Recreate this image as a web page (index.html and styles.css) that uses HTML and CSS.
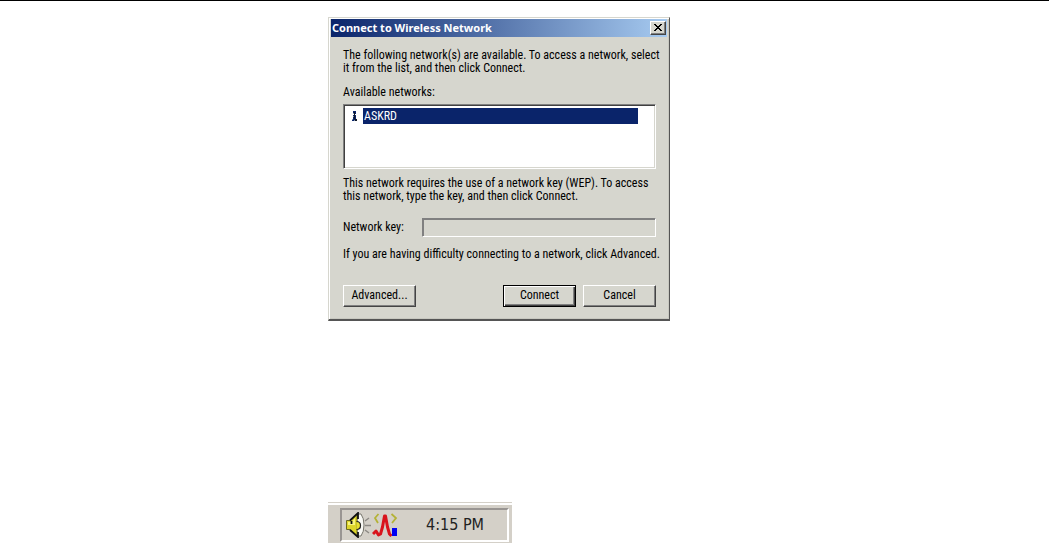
FILE: index.html
```html
<!DOCTYPE html>
<html lang="en">
<head>
    <meta charset="UTF-8">
    <meta name="viewport" content="width=device-width, initial-scale=1.0">
    <title>Connect to Wireless Network</title>
    <link rel="stylesheet" href="styles.css">
</head>
<body>
    <main class="page">
        <form class="dialog">
            <div class="titlebar">
                <h1>Connect to Wireless Network</h1>
                <button type="button" class="close" aria-label="Close">
                    <svg width="8" height="7" viewBox="0 0 8 7" shape-rendering="crispEdges">
                        <path d="M0 0h2v1h1v1h2V1h1V0h2v1H7v1H6v1H5v1h1v1h1v1h1v1H6V6H5V5H3v1H2v1H0V6h1V5h1V4h1V3H2V2H1V1H0z"/>
                    </svg>
                </button>
            </div>
            <div class="content">
                <p>The following network(s) are available. To access a network, select<br>it from the list, and then click Connect.</p>
                <div class="networks">
                    <span id="networksLabel">Available networks:</span>
                    <ul class="list" role="listbox" aria-labelledby="networksLabel">
                        <li role="option" aria-selected="true">
                            <svg width="6" height="11" viewBox="0 0 6 11" shape-rendering="crispEdges">
                                <path fill="#0a246a" d="M2 0h3v3H2zM2 4h3v2H2zM2 6h3v2H2zM1 8h5v2H1z"/>
                                <path fill="#101828" d="M3 1h1v2H3zM3 3h1v2H3zM3 5h1v3H3zM4 8h2v2H4z"/>
                                <path fill="#7f93ad" d="M2 2h1v1H2zM2 5h1v1H2zM1 8h1v1H1zM3 9h1v1H3z"/>
                            </svg>
                            <span class="name">ASKRD</span>
                        </li>
                    </ul>
                </div>
                <p class="wep">This network requires the use of a network key (WEP). To access<br>this network, type the key, and then click Connect.</p>
                <div class="field">
                    <label for="networkKey">Network key:</label>
                    <input type="password" id="networkKey" disabled>
                </div>
                <p class="hint">If you are having difficulty connecting to a network, click Advanced.</p>
                <div class="buttons">
                    <button type="button" class="advanced">Advanced...</button>
                    <button type="submit" class="default">Connect</button>
                    <button type="button">Cancel</button>
                </div>
            </div>
        </form>

        <div class="taskbar">
            <div class="tray">
                <svg width="26" height="26" viewBox="0 0 26 26">
                    <path fill="#f8f8f4" stroke="#77756c" d="M11 2h4q3 4 3 11t-3 11h-4z"/>
                    <path fill="#ddd52c" stroke="#6d6b20" d="M.5 8.500h4L11 2v22l-6.500-6.500h-4z"/>
                    <path fill="#f8f580" d="M2 10h4l3-4v7H2z"/>
                    <path fill="none" stroke="#111" stroke-width="1.800" d="M4 8.500L12 1v6M4 18l8 7v-5M5.500 9v3"/>
                    <path fill="#e8e030" stroke="#222" stroke-width="1.200" d="M10.500 9.500q4 0 4 4t-4 4"/>
                    <path stroke="#8c8984" stroke-width="1.400" d="M19 9l4-3M19 13.500h6M19 18l4 3"/>
                </svg>
                <svg width="26" height="26" viewBox="0 0 26 26">
                    <path fill="none" stroke="#b4b236" stroke-width="1.800" d="M6.500 2L3 6l3 5M19.500 2L24 6l-4 5"/>
                    <path fill="none" stroke="#d9141c" stroke-width="3" stroke-linejoin="round" d="M1 22l3-3 2.500 4 2-1 2-7 2-11h1l2 11 2 7 2 2"/>
                    <path fill="#0000f4" d="M20 16h5v8h-5z"/>
                </svg>
                <time datetime="16:15">4:15 PM</time>
            </div>
        </div>
    </main>
</body>
</html>
```
FILE: styles.css
```css
* {
    box-sizing: border-box;
}
body {
    margin: 0;
    background-color: white;
    color: black;
    font-family: "Roboto Condensed", Roboto, "Liberation Sans", sans-serif;
    font-size: 12px;
    line-height: 13px;
}
h1,
p,
ul {
    margin: 0;
    padding: 0;
}
.page {
    border-top: 1px solid black;
    padding: 16px 0 0 328px;
}
.dialog {
    max-width: 342px;
    padding: 0 1px 1px 1px;
    background-color: #d6d6ce;
    border: 1px solid #d6d6ce;
    border-right: 1px solid #555;
    border-bottom: 2px solid #555;
    box-shadow: inset 1px 1px white, inset -1px -1px #c8c8c0;
}
.titlebar {
    display: flex;
    align-items: center;
    justify-content: space-between;
    height: 18px;
    margin: 1px 1px 0;
    padding: 0 1px;
    background: linear-gradient(90deg, #0a246a, #a6caf0);
}
.titlebar h1 {
    color: white;
    font-family: "Noto Sans", "DejaVu Sans Condensed", sans-serif;
    font-size: 11px;
    font-weight: bold;
    line-height: 12px;
    white-space: nowrap;
}
button {
    width: 73px;
    height: 22px;
    padding: 0 0 2px;
    background-color: #d6d6ce;
    border: 1px solid;
    border-color: white #444 #444 white;
    border-radius: 0;
    box-shadow: inset -1px -1px #808080;
    color: black;
    font: inherit;
}
.close {
    display: flex;
    align-items: center;
    justify-content: center;
    width: 16px;
    height: 14px;
    padding: 0 1px 1px 0;
}
.content {
    padding: 12px 12px 11px 13px;
    white-space: nowrap;
}
.networks {
    margin-top: 11px;
}
.list {
    height: 65px;
    margin-top: 5px;
    padding: 2px 17px 2px 7px;
    background-color: white;
    border: 1px solid;
    border-color: #808080 white white #808080;
    box-shadow: inset 1px 1px #404040, inset -1px -1px #d6d6ce;
    list-style: none;
}
.list li {
    display: flex;
    align-items: center;
    gap: 6px;
    height: 18px;
}
.list .name {
    flex: 1;
    padding: 1px;
    line-height: 14px;
    background-color: #0a246a;
    color: white;
}
.wep {
    margin-top: 8px;
}
.field {
    display: flex;
    align-items: center;
    justify-content: space-between;
    margin-top: 15px;
}
.field input {
    width: 234px;
    height: 19px;
    background-color: #d6d6ce;
    border: 1px solid;
    border-color: #808080 white white #808080;
    border-radius: 0;
    box-shadow: inset 1px 1px #808080;
}
.hint {
    margin-top: 11px;
}
.buttons {
    display: flex;
    gap: 7px;
    margin-top: 24px;
}
.buttons .advanced {
    margin-right: auto;
}
.buttons .default {
    border-color: black;
    box-shadow: inset 1px 1px white, inset -1px -1px #404040, inset -2px -2px #808080;
}
.taskbar {
    max-width: 184px;
    margin-top: 181px;
    padding: 3px 3px 1px 12px;
    background-color: #d4d0c8;
    border-top: 1px solid #d4d0c8;
    box-shadow: inset 0 2px white;
}
.tray {
    display: flex;
    align-items: center;
    height: 34px;
    margin-top: 2px;
    padding: 0 23px 0 4px;
    border: 2px solid;
    border-color: #999592 white white #999592;
}
.tray svg {
    flex: none;
}
.tray time {
    margin-left: auto;
    color: #222;
    font-family: "DejaVu Sans Condensed", "DejaVu Sans", sans-serif;
    font-size: 16px;
    line-height: 20px;
    white-space: nowrap;
}
```
